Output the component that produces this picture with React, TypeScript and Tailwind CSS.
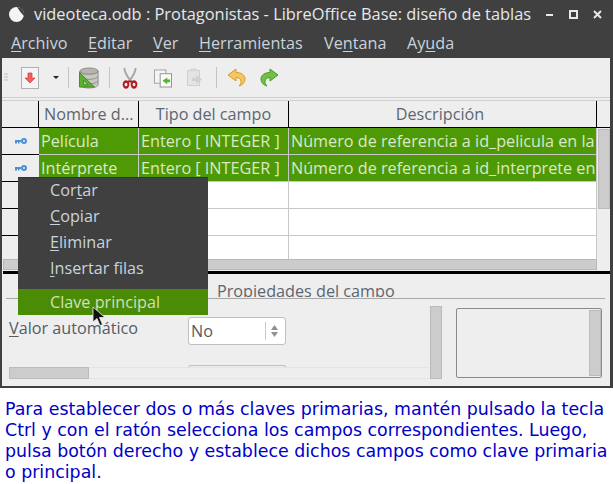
import type { ReactNode } from "react";

const ui = "font-['Open_Sans',sans-serif]";

const menus = [
  { pre: "", key: "A", post: "rchivo", w: "w-[77px]" },
  { pre: "", key: "E", post: "ditar", w: "w-[65px]" },
  { pre: "", key: "V", post: "er", w: "w-[46px]" },
  { pre: "", key: "H", post: "erramientas", w: "w-[125px]" },
  { pre: "Ve", key: "n", post: "tana", w: "w-[83px]" },
  { pre: "Ay", key: "u", post: "da", w: "w-[60px]" },
];

const rows = [
  { name: "Película", desc: "Número de referencia a id_pelicula en la" },
  { name: "Intérprete", desc: "Número de referencia a id_interprete en" },
];

function KeyIcon() {
  return (
    <svg width="12" height="8" viewBox="0 0 12 8">
      <path d="M0 3h6v2H4.500v1.500H3V5H2v1.500H0z" fill="#4a90d9" />
      <circle cx="9" cy="4" r="2" fill="#eeeeee" stroke="#4a90d9" strokeWidth="2" />
    </svg>
  );
}

function Toolbar() {
  return (
    <div className="flex h-[39px] items-center bg-[#eeeeee] pl-[2px]">
      <svg width="4" height="9" viewBox="0 0 4 9" className="mr-[13px]">
        <path d="M0 1h4M0 4h4M0 7h4" stroke="#bdbdbd" strokeWidth="1" />
      </svg>
      <div className="flex h-[22px] w-[18px] items-center justify-center border border-[#b0b0b0] bg-[#f4f4f4]">
        <svg width="12" height="12" viewBox="0 0 12 12">
          <path d="M4 1h4v5h3l-5 5-5-5h3z" fill="#f0605f" stroke="#d83c3c" strokeWidth="0.700" />
        </svg>
      </div>
      <svg width="6" height="3" viewBox="0 0 6 3" className="ml-[14px]">
        <path d="M0 0h6L3 3z" fill="#222" />
      </svg>
      <div className="ml-[9px] mr-[10px] h-[21px] w-px bg-[#c4c4c4]" />
      <svg width="20" height="22" viewBox="0 0 22 23">
        <ellipse cx="11" cy="4" rx="10" ry="3.500" fill="#b5b5ae" stroke="#8a8a84" />
        <path d="M1 4v15c0 2 4.500 3.500 10 3.500S21 21 21 19V4c0 2-4.500 3.500-10 3.500S1 6 1 4z" fill="#c8c8c0" stroke="#8a8a84" />
        <path d="M1 10c2 2 6 3 10 3s8-1 10-3M1 15c2 2 6 3 10 3s8-1 10-3" fill="none" stroke="#8a8a84" />
        <path d="M0.500 5.500 17 21.500H0.500z" fill="#5cb030" stroke="#3d8a1c" />
        <path d="M5 14l5 5H5z" fill="#c8c8c0" stroke="#3d8a1c" />
      </svg>
      <div className="ml-[10px] h-[21px] w-px bg-[#c4c4c4]" />
      <svg width="16" height="22" viewBox="0 0 20 22" preserveAspectRatio="none" className="ml-[12px]">
        <path d="M3 1c0 5 4 9 8 13M17 1c0 5-4 9-8 13" stroke="#a8a8a8" strokeWidth="2.400" fill="none" />
        <circle cx="5" cy="17.500" r="3" fill="none" stroke="#b01c22" strokeWidth="2.400" />
        <circle cx="15" cy="17.500" r="3" fill="none" stroke="#b01c22" strokeWidth="2.400" />
        <path d="M7.500 14.500h5" stroke="#b01c22" strokeWidth="2" />
      </svg>
      <svg width="18" height="20" viewBox="0 0 19 20" className="ml-[16px]">
        <rect x="0.500" y="1.500" width="12" height="14" fill="#f4f4f4" stroke="#a0a0a0" />
        <rect x="6.500" y="5.500" width="12" height="14" fill="#fafafa" stroke="#909090" />
        <path d="M14 9.500v2h3v3h-3v2l-5-3.500z" fill="#5cb030" />
      </svg>
      <svg width="17" height="19" viewBox="0 0 17 19" className="ml-[15px]">
        <rect x="0.500" y="2.500" width="12" height="15" fill="#e4e4e4" stroke="#d0d0d0" />
        <rect x="3" y="0.500" width="7" height="3" fill="#d8d8d8" />
        <path d="M9 7v3H5v3h4v3l6-4.500z" fill="#d0d0d0" />
      </svg>
      <div className="ml-[12px] mr-[10px] h-[21px] w-px bg-[#c4c4c4]" />
      <svg width="19" height="19" viewBox="0 0 19 19">
        <path d="M9 1 1 7l8 6V9.500c3 0 5 1.500 5 4 0 1.500-.5 3-2 4.500 4-1 6-4 6-7 0-4-4-6.500-9-6.500z" fill="#f6c660" stroke="#d89a30" />
      </svg>
      <svg width="19" height="19" viewBox="0 0 19 19" className="ml-[14px]">
        <path d="M10 1l8 6-8 6V9.500c-3 0-5 1.500-5 4 0 1.500.5 3 2 4.500-4-1-6-4-6-7 0-4 4-6.500 9-6.500z" fill="#72c048" stroke="#4a9a28" />
      </svg>
    </div>
  );
}

function Cell({ className, children }: { className: string; children?: ReactNode }) {
  return <div className={`overflow-hidden whitespace-nowrap ${className}`}>{children}</div>;
}

function Table() {
  const columns = "grid grid-cols-[37px_100px_150px_308px]";
  return (
    <div className="relative mt-[2px] flex flex-col border-t border-[#cfcfcf] text-[16.2px]">
      <div className={`${columns} h-[27px] border-b border-black bg-[#eeeeee] leading-[26px] text-[#5c6670]`}>
        <div className="border-r border-black" />
        <Cell className="border-r border-black pl-[5px]">Nombre d...</Cell>
        <Cell className="border-r border-black text-center">Tipo del campo</Cell>
        <Cell className="border-r border-black pr-[5px] text-center">Descripción</Cell>
      </div>
      {rows.map((r) => (
        <div key={r.name} className={`${columns} h-[27px] leading-[26px] text-[#dce8c8]`}>
          <div className="flex items-center justify-center border-b border-black bg-[#eeeeee]">
            <KeyIcon />
          </div>
          <Cell className="border-b border-r border-[#c8c8c8] bg-[#4e9a06] pl-[2px]">{r.name}</Cell>
          <Cell className="border-b border-r border-[#c8c8c8] bg-[#4e9a06] pl-[2px]">Entero [ INTEGER ]</Cell>
          <Cell className="border-b border-r border-[#c8c8c8] bg-[#4e9a06] pl-[2px]">{r.desc}</Cell>
        </div>
      ))}
      {[0, 1, 2].map((i) => (
        <div key={i} className={`${columns} ${i === 2 ? "h-[23px]" : "h-[27px] [&>div]:border-b"}`}>
          <div className="border-black bg-[#eeeeee]" />
          <div className="border-r border-[#c8c8c8] bg-white" />
          <div className="border-r border-[#c8c8c8] bg-white" />
          <div className="border-r border-[#c8c8c8] bg-white" />
        </div>
      ))}
      <div className="ml-[1px] h-[11px] w-[594px] border border-[#b8b8b8] bg-[#cccccc]" />
      <div className="absolute right-0 top-[28px] h-[80px] w-[12px] border border-[#bbbbbb] bg-[#cccccc]" />
      <div className="ml-[1px] mt-[1px] h-[3px] bg-black" />
    </div>
  );
}

function ContextMenu() {
  const items = [
    { pre: "Cor", key: "t", post: "ar" },
    { pre: "", key: "C", post: "opiar" },
    { pre: "", key: "E", post: "liminar" },
    { pre: "", key: "I", post: "nsertar filas" },
  ];
  return (
    <div className="absolute left-[18px] top-[177px] w-[190px] border-t border-[#333333] bg-[#404040] text-[16.2px] text-[#c8d4dc]">
      <div className="-mt-px flex flex-col pb-[8px]">
        {items.map((it) => (
          <div key={it.key} className="h-[26px] pl-[32px] leading-[26px]">
            {it.pre}
            <span className="underline underline-offset-2">{it.key}</span>
            {it.post}
          </div>
        ))}
      </div>
      <div className="h-[26px] bg-[#4a8c06] pl-[32px] leading-[26px] text-[#d0e0b8]">Clave principal</div>
      <svg width="14" height="21" viewBox="0 0 14 21" className="absolute left-[74px] top-[128px]">
        <path d="M1 1v15l4-3.500 3 7 2.500-1-3-7H13z" fill="#111" stroke="#eee" strokeWidth="0.800" />
      </svg>
    </div>
  );
}

function Properties() {
  return (
    <div className="flex h-[112px] flex-col overflow-hidden bg-[#eeeeee] text-[16.2px]">
      <div className="ml-[4px] mr-[5px] h-[25px] border-b border-[#a8a8a8]">
        <div className="ml-[211px] h-[23px] overflow-hidden whitespace-nowrap leading-[35px] text-[#5c6670]">Propiedades del campo</div>
      </div>
      <div className="flex min-h-0 flex-1 pt-[7px]">
        <div className="relative ml-[7px] flex w-[421px] flex-col">
          <div className="flex items-start pt-[11px]">
            <div className="w-[179px] leading-[22px] text-[#555c64]">
              <span className="underline underline-offset-2">V</span>alor automático
            </div>
            <div className="flex h-[28px] w-[98px] items-center rounded-[3px] border border-[#c0c0c0] bg-white pl-[2px] text-[#555c64]">
              <span className="flex-1">No</span>
              <div className="mr-[3px] flex h-[18px] w-[17px] flex-col items-center justify-center gap-[2px] border-l border-[#c8c8c8]">
                <svg width="7" height="5" viewBox="0 0 7 5"><path d="M3.500 0 7 5H0z" fill="#909090" /></svg>
                <svg width="7" height="5" viewBox="0 0 7 5"><path d="M0 0h7L3.500 5z" fill="#909090" /></svg>
              </div>
            </div>
          </div>
          <div className="absolute left-[179px] top-[59px] h-[3px] w-[98px] rounded-t-[3px] border border-b-0 border-[#c0c0c0] bg-[#eeeeee]" />
          <div className="absolute left-0 right-0 top-[61px] h-[12px] border-y border-[#e4e4e4]">
            <div className="-mt-px h-[12px] w-[80px] border border-[#bbbbbb] bg-[#cccccc]" />
          </div>
        </div>
        <div className="h-[73px] w-[12px] border border-[#bbbbbb] bg-[#cccccc]" />
        <div className="ml-[14px] mt-[2px] flex h-[70px] w-[146px] justify-end rounded-[2px] border border-[#8a8a8a]">
          <div className="mt-px h-[66px] w-[12px] border border-[#bbbbbb] bg-[#cccccc]" />
        </div>
      </div>
    </div>
  );
}

export default function App() {
  return (
    <div className={`relative h-[484px] w-[613px] overflow-hidden bg-white ${ui}`}>
      <div className="flex h-[388px] flex-col overflow-hidden border-b-2 border-l-2 border-r-[3px] border-[#404040] bg-[#eeeeee]">
        <div className="-ml-[2px] -mr-[3px] flex h-[28px] shrink-0 items-center bg-[#404040] pl-[8px] pr-[11px] text-[16.4px] font-medium text-[#e4e8ec]">
          <svg width="17" height="17" viewBox="0 0 17 17" className="mr-[9px]">
            <circle cx="8.500" cy="8.500" r="7.500" fill="#f4f4f4" />
            <path d="M9 1a7.500 7.500 0 0 1 7 9C13 7 11 4 9 1z" fill="#404040" />
          </svg>
          <span className="flex-1 whitespace-nowrap">videoteca.odb : Protagonistas - LibreOffice Base: diseño de tablas</span>
          <span className="flex items-center gap-[15px]">
            <svg width="9" height="9" viewBox="0 0 9 9"><path d="M1 5h7" stroke="#e8e8e8" strokeWidth="2" /></svg>
            <svg width="9" height="9" viewBox="0 0 9 9"><rect x="1" y="1" width="7" height="7" fill="none" stroke="#e8e8e8" strokeWidth="2" /></svg>
            <svg width="9" height="9" viewBox="0 0 9 9"><path d="M1 1l7 7M8 1 1 8" stroke="#e8e8e8" strokeWidth="2" /></svg>
          </span>
        </div>
        <div className="-ml-[2px] -mr-[3px] flex h-[30px] shrink-0 items-center bg-[#404040] pl-[11px] text-[16.2px] text-[#c8d4dc]">
          {menus.map((m) => (
            <span key={m.post} className={m.w}>
              {m.pre}
              <span className="underline underline-offset-2">{m.key}</span>
              {m.post}
            </span>
          ))}
        </div>
        <Toolbar />
        <div className="-ml-[2px] -mr-[3px] h-px bg-[#d0d0d0]" />
        <Table />
        <Properties />
      </div>
      <ContextMenu />
      <p className="pl-[5px] pr-[2px] pt-[11px] font-['DejaVu_Sans',sans-serif] text-[17.4px] leading-[21px] text-[#0000c8]">
        Para establecer dos o más claves primarias, mantén pulsado la tecla Ctrl y con el ratón selecciona los campos correspondientes. Luego, pulsa botón derecho y establece dichos campos como clave primaria o principal.
      </p>
    </div>
  );
}
